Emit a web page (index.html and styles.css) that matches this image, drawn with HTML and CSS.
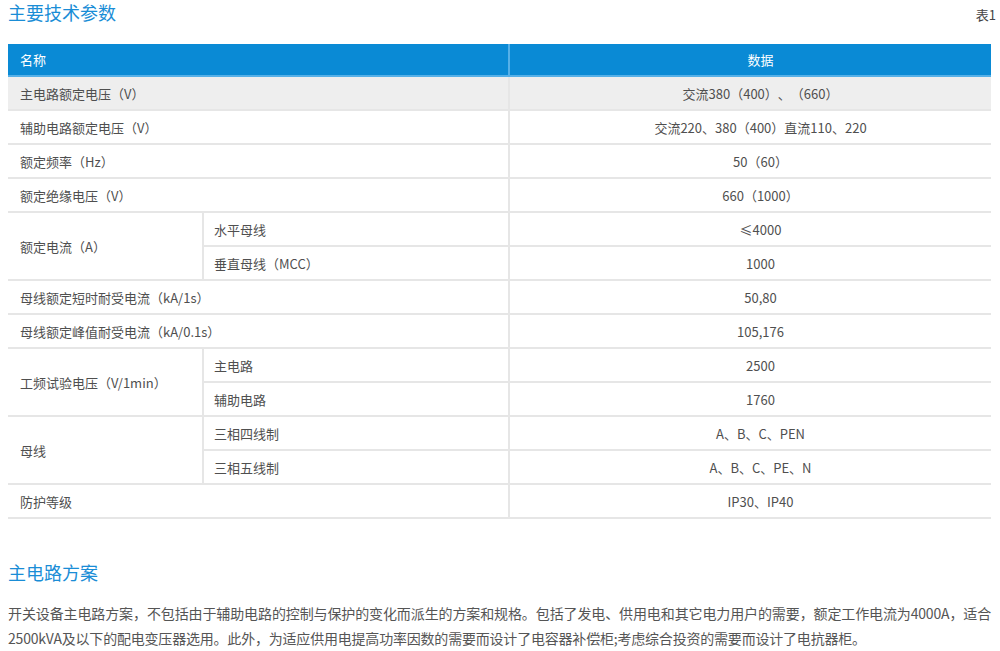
FILE: index.html
```html
<!DOCTYPE html>
<html lang="zh-CN">
<head>
<meta charset="utf-8">
<title>主要技术参数</title>
<link rel="stylesheet" href="styles.css">
</head>
<body>
<div class="title-row">
  <h2 class="section-title">主要技术参数</h2>
  <span class="table-no">表1</span>
</div>
<div class="spec">
  <div class="head wide">名称</div>
  <div class="head val">数据</div>

  <div class="cell wide shade">主电路额定电压（V）</div>
  <div class="cell val shade">交流380（400）、（660）</div>

  <div class="cell wide">辅助电路额定电压（V）</div>
  <div class="cell val">交流220、380（400）直流110、220</div>

  <div class="cell wide">额定频率（Hz）</div>
  <div class="cell val">50（60）</div>

  <div class="cell wide">额定绝缘电压（V）</div>
  <div class="cell val">660（1000）</div>

  <div class="cell group">额定电流（A）</div>
  <div class="cell sub">水平母线</div>
  <div class="cell val">≤4000</div>
  <div class="cell sub">垂直母线（MCC）</div>
  <div class="cell val">1000</div>

  <div class="cell wide">母线额定短时耐受电流（kA/1s）</div>
  <div class="cell val">50,80</div>

  <div class="cell wide">母线额定峰值耐受电流（kA/0.1s）</div>
  <div class="cell val">105,176</div>

  <div class="cell group">工频试验电压（V/1min）</div>
  <div class="cell sub">主电路</div>
  <div class="cell val">2500</div>
  <div class="cell sub">辅助电路</div>
  <div class="cell val">1760</div>

  <div class="cell group">母线</div>
  <div class="cell sub">三相四线制</div>
  <div class="cell val">A、B、C、PEN</div>
  <div class="cell sub">三相五线制</div>
  <div class="cell val">A、B、C、PE、N</div>

  <div class="cell wide">防护等级</div>
  <div class="cell val">IP30、IP40</div>
</div>

<h2 class="section-title second">主电路方案</h2>
<p class="desc">开关设备主电路方案，不包括由于辅助电路的控制与保护的变化而派生的方案和规格。包括了发电、供用电和其它电力用户的需要，额定工作电流为4000A，适合2500kVA及以下的配电变压器选用。此外，为适应供用电提高功率因数的需要而设计了电容器补偿柜;考虑综合投资的需要而设计了电抗器柜。</p>
</body>
</html>
```

FILE: styles.css
```css
html, body {
  margin: 0;
  padding: 0;
  background: #ffffff;
}

body {
  padding: 0 8px;
  font-family: "Noto Sans CJK SC", "Noto Sans", sans-serif;
  color: #555555;
  text-spacing-trim: space-all;
}

.title-row {
  display: flex;
  justify-content: space-between;
  align-items: flex-start;
  width: 988px;
  height: 25px;
}

.section-title {
  margin: 0;
  font-size: 18px;
  font-weight: normal;
  line-height: 25px;
  color: #1a8dd6;
}

.table-no {
  font-size: 13px;
  line-height: 30px;
  color: #444444;
}

.spec {
  display: grid;
  grid-template-columns: 196px 306px 481px;
  grid-template-rows: 33px repeat(13, 34px);
  width: 983px;
  margin-top: 19px;
  font-size: 13px;
}

.spec > div {
  box-sizing: border-box;
  display: flex;
  align-items: center;
  padding-left: 12px;
  border-bottom: 2px solid #e6e6e6;
  white-space: nowrap;
  color: #4f4f4f;
}

.spec > .head {
  background: #0a8ad5;
  color: #ffffff;
  border-bottom: 2px solid #55b0e8;
}

.spec > .head.wide {
  border-right: 2px solid #55b0e8;
}

.wide {
  grid-column: span 2;
  border-right: 2px solid #e6e6e6;
}

.group {
  grid-row: span 2;
  border-right: 2px solid #e6e6e6;
}

.sub {
  padding-left: 10px !important;
  border-right: 2px solid #e6e6e6;
}

.spec > .val {
  justify-content: center;
  padding-left: 20px;
}

.shade {
  background: #eeeeee;
}

.second {
  margin-top: 41px;
}

.desc {
  width: 983px;
  margin: 16px 0 0;
  font-size: 14px;
  line-height: 25px;
  text-align: justify;
  letter-spacing: -0.2px;
  color: #555555;
}
```
